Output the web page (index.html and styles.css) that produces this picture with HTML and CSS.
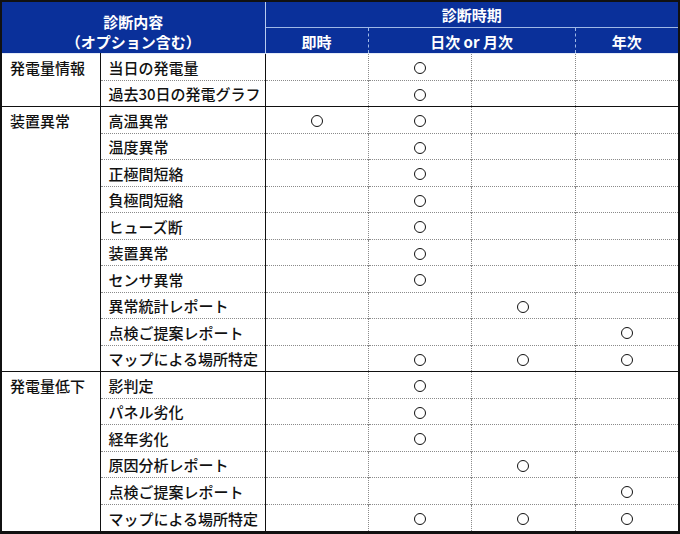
FILE: index.html
```html
<!DOCTYPE html>
<html lang="ja">
<head>
<meta charset="utf-8">
<title>診断内容</title>
<link rel="stylesheet" href="styles.css">
</head>
<body>
<div class="frame">
<table class="grid">
  <colgroup>
    <col class="c-group"><col class="c-item"><col class="c-now"><col class="c-day"><col class="c-month"><col class="c-year">
  </colgroup>
  <thead>
    <tr class="h1">
      <th colspan="2" rowspan="2" class="h-content">診断内容<br>（オプション含む）</th>
      <th colspan="4" class="h-period">診断時期</th>
    </tr>
    <tr class="h2">
      <th class="h-now">即時</th>
      <th colspan="2" class="h-day">日次 or 月次</th>
      <th class="h-year">年次</th>
    </tr>
  </thead>
  <tbody class="grp">
    <tr class="first"><td rowspan="2" class="group">発電量情報</td><td class="item">当日の発電量</td><td class="mk"></td><td class="mk"><span class="o"></span></td><td class="mk"></td><td class="mk"></td></tr>
    <tr><td class="item">過去30日の発電グラフ</td><td class="mk"></td><td class="mk"><span class="o"></span></td><td class="mk"></td><td class="mk"></td></tr>
  </tbody>
  <tbody class="grp">
    <tr class="first"><td rowspan="10" class="group">装置異常</td><td class="item">高温異常</td><td class="mk"><span class="o"></span></td><td class="mk"><span class="o"></span></td><td class="mk"></td><td class="mk"></td></tr>
    <tr><td class="item">温度異常</td><td class="mk"></td><td class="mk"><span class="o"></span></td><td class="mk"></td><td class="mk"></td></tr>
    <tr><td class="item">正極間短絡</td><td class="mk"></td><td class="mk"><span class="o"></span></td><td class="mk"></td><td class="mk"></td></tr>
    <tr><td class="item">負極間短絡</td><td class="mk"></td><td class="mk"><span class="o"></span></td><td class="mk"></td><td class="mk"></td></tr>
    <tr><td class="item">ヒューズ断</td><td class="mk"></td><td class="mk"><span class="o"></span></td><td class="mk"></td><td class="mk"></td></tr>
    <tr><td class="item">装置異常</td><td class="mk"></td><td class="mk"><span class="o"></span></td><td class="mk"></td><td class="mk"></td></tr>
    <tr><td class="item">センサ異常</td><td class="mk"></td><td class="mk"><span class="o"></span></td><td class="mk"></td><td class="mk"></td></tr>
    <tr><td class="item">異常統計レポート</td><td class="mk"></td><td class="mk"></td><td class="mk"><span class="o"></span></td><td class="mk"></td></tr>
    <tr><td class="item">点検ご提案レポート</td><td class="mk"></td><td class="mk"></td><td class="mk"></td><td class="mk"><span class="o"></span></td></tr>
    <tr><td class="item">マップによる場所特定</td><td class="mk"></td><td class="mk"><span class="o"></span></td><td class="mk"><span class="o"></span></td><td class="mk"><span class="o"></span></td></tr>
  </tbody>
  <tbody class="grp">
    <tr class="first"><td rowspan="6" class="group">発電量低下</td><td class="item">影判定</td><td class="mk"></td><td class="mk"><span class="o"></span></td><td class="mk"></td><td class="mk"></td></tr>
    <tr><td class="item">パネル劣化</td><td class="mk"></td><td class="mk"><span class="o"></span></td><td class="mk"></td><td class="mk"></td></tr>
    <tr><td class="item">経年劣化</td><td class="mk"></td><td class="mk"><span class="o"></span></td><td class="mk"></td><td class="mk"></td></tr>
    <tr><td class="item">原因分析レポート</td><td class="mk"></td><td class="mk"></td><td class="mk"><span class="o"></span></td><td class="mk"></td></tr>
    <tr><td class="item">点検ご提案レポート</td><td class="mk"></td><td class="mk"></td><td class="mk"></td><td class="mk"><span class="o"></span></td></tr>
    <tr><td class="item">マップによる場所特定</td><td class="mk"></td><td class="mk"><span class="o"></span></td><td class="mk"><span class="o"></span></td><td class="mk"><span class="o"></span></td></tr>
  </tbody>
</table>
</div>
</body>
</html>
```
FILE: styles.css
```css
html, body {
  margin: 0;
  padding: 0;
  background: #ffffff;
}

.frame {
  width: 676px;
  border: 2px solid #111;
  border-bottom-width: 3px;
}

.grid {
  width: 676px;
  table-layout: fixed;
  border-collapse: collapse;
  font-family: "Noto Sans CJK JP", "Noto Sans", sans-serif;
  font-size: 15px;
  color: #111;
}

.c-group { width: 98px; }
.c-item { width: 165px; }
.c-now { width: 103px; }
.c-day { width: 103px; }
.c-month { width: 104px; }
.c-year { width: 103px; }

thead th {
  background: #0a309a;
  color: #ffffff;
  font-weight: 700;
  font-size: 15px;
  padding: 0;
  text-align: center;
  border: none;
}

.h1 { height: 25px; }
.h2 { height: 26.5px; }

.h1 th { line-height: 20px; padding-top: 1px; }
.h2 th { line-height: 20px; padding-top: 3px; border-top: 1px solid #9fb8e6; }

.h-content {
  line-height: 20px;
  padding-top: 7px;
  vertical-align: middle;
  border-right: 1px solid #b8cbee;
}

.h1 th.h-content { padding-top: 8px; }
.h-now { border-right: 1px dashed #9fb8e6; }
.h-day { border-right: 1px dashed #9fb8e6; }

tbody tr { height: 26.5px; }

tbody td {
  padding: 2px 0 0 0;
  border-top: 1px dotted #8a8a8a;
  border-left: 1px dotted #8a8a8a;
  vertical-align: middle;
  line-height: 20px;
}

tbody tr.first td {
  border-top: 1px solid #111;
}

thead + tbody tr.first td {
  border-top: 1px solid #e4ebf8;
}

td.group {
  vertical-align: top;
  padding: 4px 0 0 8px;
  border-left: none;
  border-right: 1px solid #111;
  font-weight: 500;
  white-space: nowrap;
}

td.item {
  padding-left: 8px;
  border-right: 1px solid #111;
  border-left: 1px solid #111;
  font-weight: 500;
  white-space: nowrap;
}

td.mk {
  text-align: center;
  line-height: 0;
  padding-top: 3px;
}

td.item + td.mk { border-left: 1px solid #111; }

.o {
  display: inline-block;
  width: 10px;
  height: 10px;
  border: 1.5px solid #111;
  border-radius: 50%;
  vertical-align: middle;
}
```
